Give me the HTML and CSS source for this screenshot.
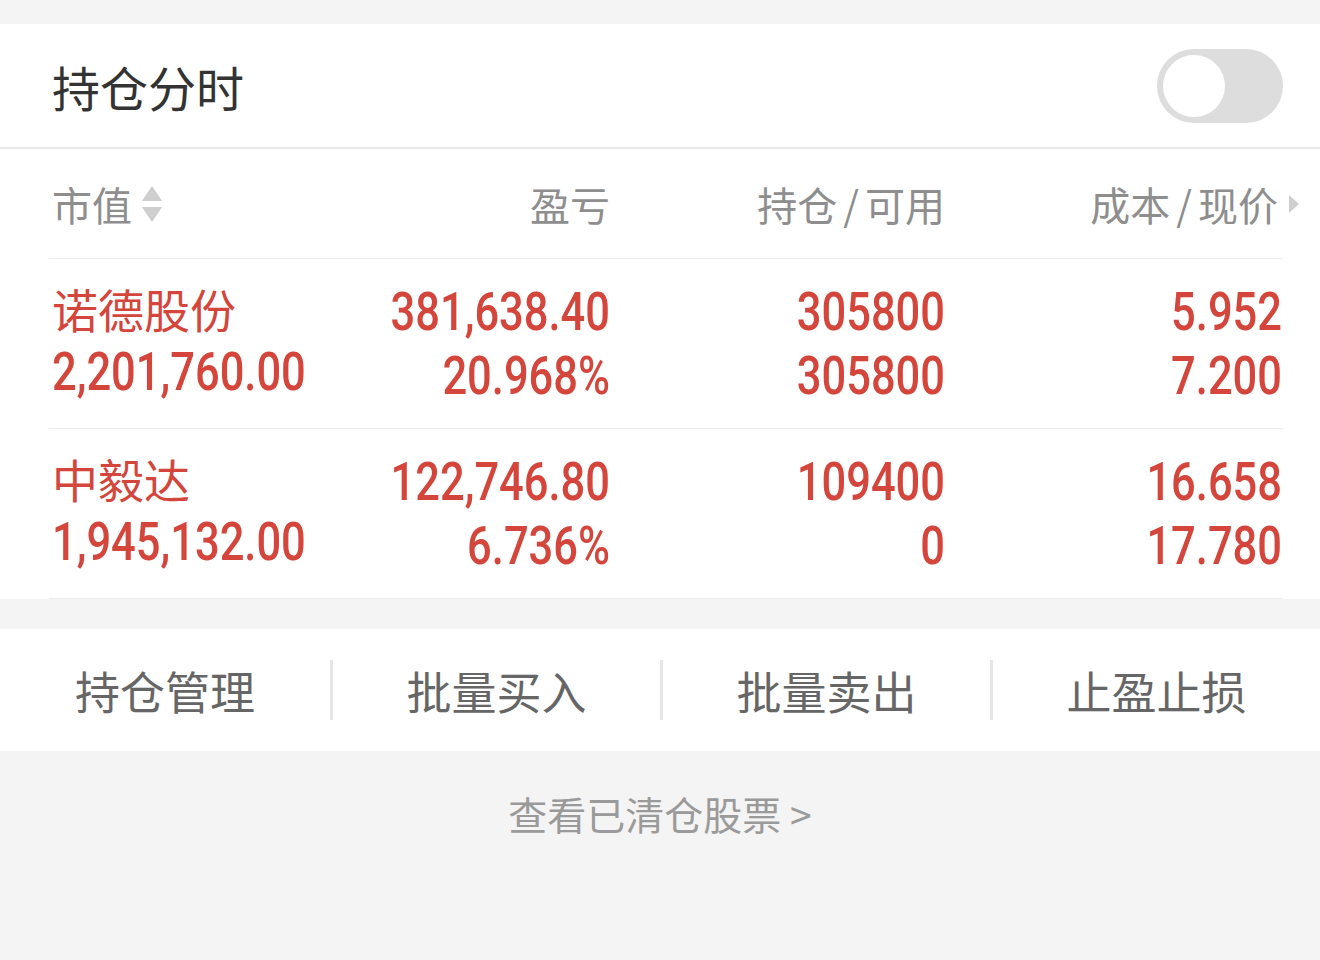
FILE: index.html
```html
<!doctype html>
<html lang="zh-CN">

<head>
    <meta charset="UTF-8">
    <meta name="viewport" content="width=device-width, initial-scale=1.0">
    <title>持仓</title>
    <link rel="stylesheet" href="styles.css">
</head>

<body>
    <div class="page">
        <div class="title-bar">
            <h2>持仓分时</h2>
            <div class="switch"><span class="knob"></span></div>
        </div>

        <div class="positions">
            <div class="row head">
                <div class="cell left">市值
                    <svg class="sort" width="22" height="40" viewBox="0 0 22 40">
                        <path d="M11 2 L21 17 L1 17 Z" fill="#cfcfcf" />
                        <path d="M1 23 L21 23 L11 38 Z" fill="#cfcfcf" />
                    </svg>
                </div>
                <div class="cell">盈亏</div>
                <div class="cell">持仓<span class="slash">/</span>可用</div>
                <div class="cell">成本<span class="slash">/</span>现价
                    <svg class="more" width="12" height="20" viewBox="0 0 12 20">
                        <path d="M1 1 L11 10 L1 19 Z" fill="#cfcfcf" />
                    </svg>
                </div>
            </div>

            <div class="row stock">
                <div class="cell left">
                    <div class="name">诺德股份</div>
                    <div class="num">2,201,760.00</div>
                </div>
                <div class="cell">
                    <div class="num">381,638.40</div>
                    <div class="num">20.968%</div>
                </div>
                <div class="cell">
                    <div class="num">305800</div>
                    <div class="num">305800</div>
                </div>
                <div class="cell">
                    <div class="num">5.952</div>
                    <div class="num">7.200</div>
                </div>
            </div>

            <div class="row stock">
                <div class="cell left">
                    <div class="name">中毅达</div>
                    <div class="num">1,945,132.00</div>
                </div>
                <div class="cell">
                    <div class="num">122,746.80</div>
                    <div class="num">6.736%</div>
                </div>
                <div class="cell">
                    <div class="num">109400</div>
                    <div class="num">0</div>
                </div>
                <div class="cell">
                    <div class="num">16.658</div>
                    <div class="num">17.780</div>
                </div>
            </div>
        </div>

        <div class="actions">
            <a href="#" class="action">持仓管理</a>
            <a href="#" class="action">批量买入</a>
            <a href="#" class="action">批量卖出</a>
            <a href="#" class="action">止盈止损</a>
        </div>

        <a href="#" class="cleared">查看已清仓股票&nbsp;&gt;</a>
    </div>
</body>

</html>
```

FILE: styles.css
```css
body {
    margin: 0;
    background: #f4f4f4;
    font-family: "Noto Sans CJK SC", "Noto Sans", sans-serif;
}

.page {
    width: 1320px;
    min-height: 960px;
    padding-top: 24px;
    box-sizing: border-box;
}

.title-bar {
    background: #fff;
    height: 123px;
    display: flex;
    align-items: center;
    justify-content: space-between;
    padding: 0 37px 0 52px;
    border-bottom: 2px solid #e9e9e9;
}

.title-bar h2 {
    margin: 0;
    font-size: 48px;
    font-weight: 400;
    color: #333;
}

.switch {
    width: 126px;
    height: 74px;
    border-radius: 37px;
    background: #dddddd;
    position: relative;
}

.switch .knob {
    position: absolute;
    left: 6px;
    top: 6px;
    width: 62px;
    height: 62px;
    border-radius: 50%;
    background: #fff;
}

.positions {
    background: #fff;
    padding: 0 37px 0 49px;
}

.row {
    display: grid;
    grid-template-columns: 250px 311px 335px 337px;
    border-bottom: 1px solid #ececec;
}

.cell {
    text-align: right;
}

.cell.left {
    text-align: left;
    padding-left: 3px;
}

.row.head {
    height: 109px;
    align-items: center;
}

.row.head .cell {
    font-size: 40px;
    color: #8e8e8e;
    display: flex;
    align-items: center;
    justify-content: flex-end;
}

.row.head .cell.left {
    justify-content: flex-start;
}

.slash {
    margin: 0 6px;
}

.sort {
    margin-left: 9px;
}

.more {
    margin-left: 10px;
    margin-right: -18px;
}

.row.stock {
    height: 169px;
    align-content: center;
    color: #d4453c;
}

.row.stock .cell > div {
    height: 64px;
    line-height: 64px;
    white-space: nowrap;
}

.name {
    font-size: 46px;
    margin-top: -4px;
}

/* condensed DIN-style figures */
.num {
    font-family: Roboto, "Liberation Sans", sans-serif;
    font-weight: 500;
    font-size: 53px;
    transform: scaleX(0.82);
    transform-origin: right center;
}

.cell.left .num {
    transform-origin: left center;
}

.actions {
    margin-top: 30px;
    background: #fff;
    height: 122px;
    display: grid;
    grid-template-columns: repeat(4, 330px);
    align-items: center;
}

.action {
    display: flex;
    align-items: center;
    justify-content: center;
    height: 60px;
    font-size: 45px;
    color: #666;
    text-decoration: none;
}

.action + .action {
    border-left: 3px solid #e6e6e6;
}

.cleared {
    display: block;
    text-align: center;
    margin-top: 34px;
    font-size: 39px;
    color: #9a9a9a;
    text-decoration: none;
}
```
